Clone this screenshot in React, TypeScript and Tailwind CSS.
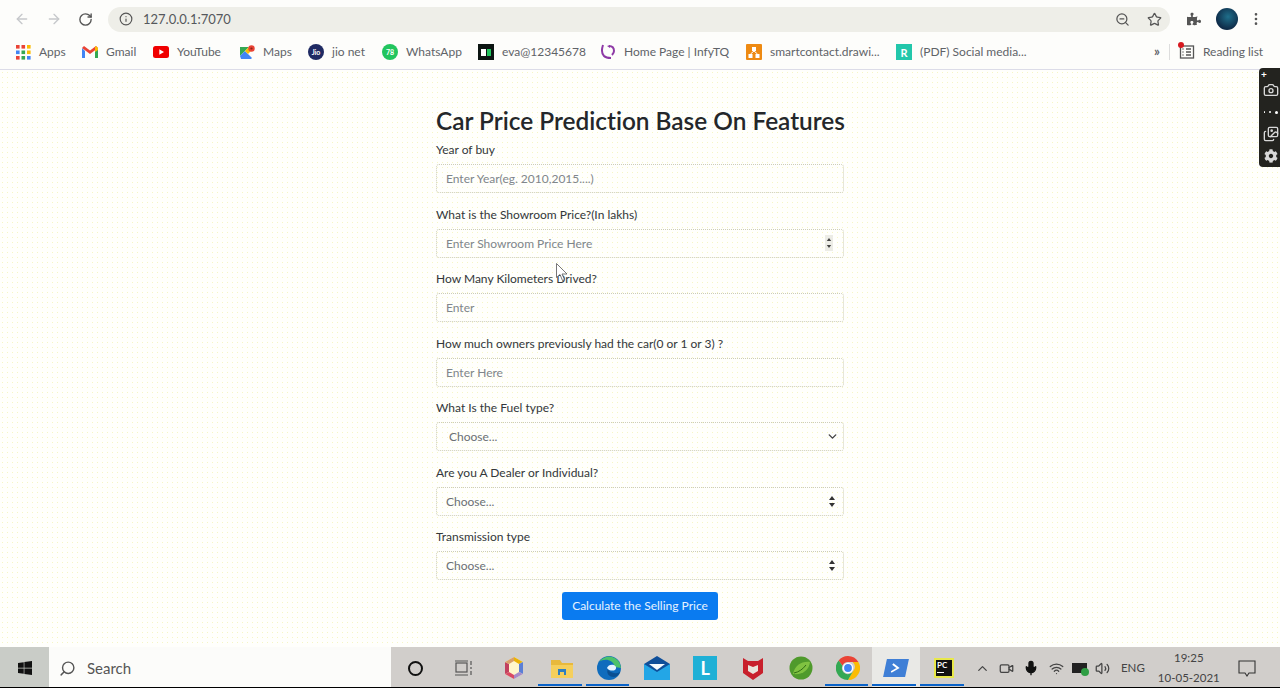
import { ArrowLeft, ArrowRight, RotateCw, Info, ZoomOut, Star, MoreVertical, ChevronDown, ChevronUp, Camera, Images, Search, Mic, Wifi, Volume2, Video } from "lucide-react";
import { FaCog, FaPuzzlePiece, FaWindows } from "react-icons/fa";

const font = { fontFamily: 'Lato, "Noto Sans", sans-serif' };

const AppsIcon = () => (
  <svg width="15" height="15" viewBox="0 0 15 15">
    {[["#ea4335", "#ea4335", "#fbbc04"], ["#4285f4", "#34a853", "#fbbc04"], ["#ea4335", "#34a853", "#4285f4"]].map((row, y) =>
      row.map((c, x) => <rect key={`${x}-${y}`} x={x * 5.5} y={y * 5.5} width="3.6" height="3.6" fill={c} />)
    )}
  </svg>
);

const GmailIcon = () => (
  <svg width="16" height="12" viewBox="0 0 16 12">
    <path d="M0 2v10h3V5z" fill="#4285f4" />
    <path d="M16 2v10h-3V5z" fill="#34a853" />
    <path d="M0 2l8 6 8-6-2-2-6 4.5L2 0z" fill="#ea4335" />
    <path d="M14 0l2 2v2l-3 2V1z" fill="#fbbc04" />
  </svg>
);

const YoutubeIcon = () => (
  <svg width="16" height="12" viewBox="0 0 16 12">
    <rect width="16" height="12" rx="2.5" fill="#f00000" />
    <path d="M6.3 3.2v5.6L11 6z" fill="#fff" />
  </svg>
);

const MapsIcon = () => (
  <svg width="15" height="15" viewBox="0 0 15 15">
    <path d="M0 2h9L0 11z" fill="#34a853" />
    <path d="M0 11l5-5 7 7-1 1H1z" fill="#4285f4" />
    <path d="M9 2L5 6l3 3 4-4z" fill="#fbbc04" />
    <circle cx="11.5" cy="3.5" r="3.2" fill="#ea4335" />
    <circle cx="11.5" cy="3.5" r="1.1" fill="#8c2318" />
  </svg>
);

const JioIcon = () => (
  <div className="w-4 h-4 rounded-full bg-[#1f2a63] flex items-center justify-center text-white text-[7px] font-bold leading-none">Jio</div>
);

const WhatsIcon = () => (
  <div className="w-4 h-4 rounded-full bg-[#22c55e] flex items-center justify-center text-white text-[7px] font-bold leading-none">78</div>
);

const HackIcon = () => (
  <div className="w-4 h-4 bg-[#0c1512] flex items-center justify-center gap-px">
    <div className="w-[5px] h-[7px] bg-white" />
    <div className="w-[4px] h-[7px] bg-[#22c55e]" />
  </div>
);

const InfyIcon = () => (
  <svg width="16" height="16" viewBox="0 0 16 16" fill="none" strokeWidth="2">
    <path d="M3 1c-1 3-2 8 1 11 2 2 5 2 7 2" stroke="#8e3aa6" />
    <path d="M9 2c3 0 5 2 5 5 0 2-1 3-2 4" stroke="#8e3aa6" />
    <path d="M7 2l3-1v3z" fill="#8e3aa6" />
  </svg>
);

const DrawIcon = () => (
  <svg width="16" height="16" viewBox="0 0 16 16">
    <rect width="16" height="16" rx="1" fill="#ee8a12" />
    <rect x="6" y="3" width="4" height="4" fill="#fff" />
    <rect x="2.5" y="10" width="4" height="4" fill="#fff" />
    <rect x="9.5" y="10" width="4" height="4" fill="#fff" />
    <path d="M8 7l-3.5 3M8 7l3.5 3" stroke="#fff" />
  </svg>
);

const RIcon = () => (
  <div className="w-4 h-4 bg-[#22c7ab] flex items-center justify-center text-white text-[11px] font-bold leading-none">R</div>
);

const bookmarks = [
  { icon: <AppsIcon />, label: "Apps", width: "w-[67px]" },
  { icon: <GmailIcon />, label: "Gmail", width: "w-[71px]" },
  { icon: <YoutubeIcon />, label: "YouTube", width: "w-[86px]" },
  { icon: <MapsIcon />, label: "Maps", width: "w-[69px]" },
  { icon: <JioIcon />, label: "jio net", width: "w-[74px]" },
  { icon: <WhatsIcon />, label: "WhatsApp", width: "w-[96px]" },
  { icon: <HackIcon />, label: "eva@12345678", width: "w-[122px]" },
  { icon: <InfyIcon />, label: "Home Page | InfyTQ", width: "w-[146px]" },
  { icon: <DrawIcon />, label: "smartcontact.drawi...", width: "w-[150px]" },
  { icon: <RIcon />, label: "(PDF) Social media...", width: "w-[140px]" },
];

const Toolbar = () => (
  <div className="h-[38px] flex items-center bg-[#fdfdfb] text-[#5f6368]">
    <div className="w-[108px] flex items-center pl-[14px] gap-[16px]">
      <ArrowLeft size={16} className="text-[#c6c8cb]" />
      <ArrowRight size={16} className="text-[#c6c8cb]" />
      <RotateCw size={15} strokeWidth={2.2} className="text-[#555]" />
    </div>
    <div className="w-[1062px] h-[25px] rounded-full bg-[#eeeee8] flex items-center pl-[11px] pr-[8px]">
      <Info size={14} className="text-[#555]" />
      <span className="ml-[10px] pt-px text-[13px] text-[#55585c]">127.0.0.1:7070</span>
      <ZoomOut size={15} className="ml-auto text-[#555]" />
      <Star size={15} className="ml-[17px] text-[#555]" />
    </div>
    <FaPuzzlePiece size={14} className="ml-[17px] text-[#555]" />
    <div className="ml-[15px] w-[22px] h-[22px] rounded-full bg-[radial-gradient(circle_at_55%_40%,#1f6f8b,#0e2a47_70%)]" />
    <MoreVertical size={16} className="ml-[10px] text-[#555]" />
  </div>
);

const BookmarkBar = () => (
  <div className="h-[32px] pb-[3px] flex items-center pl-[15px] bg-[#fdfdfb] border-b border-[#dcdce8] text-[12px] text-[#5f6368]">
    {bookmarks.map((b) => (
      <div key={b.label} className={`${b.width} flex items-center gap-2 whitespace-nowrap`}>
        <div className="w-4 flex justify-center">{b.icon}</div>
        <span>{b.label}</span>
      </div>
    ))}
    <span className="ml-[118px] text-[13px] font-bold">»</span>
    <div className="ml-[9px] w-px h-4 bg-[#dddddd]" />
    <div className="relative ml-[9px] flex items-center gap-2 whitespace-nowrap">
      <svg width="16" height="14" viewBox="0 0 16 14" fill="none" stroke="#555" strokeWidth="1.3">
        <rect x="1.5" y="1" width="13" height="12" />
        <path d="M7 4h5M7 7h5M7 10h5M3.5 4h1M3.5 7h1M3.5 10h1" />
      </svg>
      <span>Reading list</span>
      <div className="absolute -left-px top-[-1px] w-[6px] h-[6px] rounded-full bg-[#d71920]" />
    </div>
  </div>
);

const Field = ({ label, placeholder, spin }: { label: string; placeholder: string; spin?: boolean }) => (
  <div className="h-[64.5px]">
    <label className="block h-[23px] leading-[18px] text-[12px] text-[#33373a]">{label}</label>
    <div className="relative">
      <input
        placeholder={placeholder}
        className="w-full h-[29px] px-[9px] rounded-[3px] border border-dotted border-[#cdcdb8] bg-transparent text-[12px] placeholder:text-[#80868b] outline-none"
      />
      {spin && (
        <svg className="absolute right-[11px] top-[6px]" width="8" height="16" viewBox="0 0 8 16">
          <rect width="8" height="16" fill="#ecece6" />
          <path d="M4 3l2.2 3H1.8zM4 13l2.2-3H1.8z" fill="#444" />
        </svg>
      )}
    </div>
  </div>
);

const SelectField = ({ label, chevron }: { label: string; chevron?: boolean }) => (
  <div className="h-[64.5px]">
    <label className="block h-[23px] leading-[18px] text-[12px] text-[#33373a]">{label}</label>
    <div className="relative">
      <select
        defaultValue=""
        className={`appearance-none w-full h-[29px] pt-px rounded-[3px] border border-dotted border-[#cdcdb8] bg-transparent text-[12px] text-[#6b7075] outline-none ${chevron ? "pl-[12px]" : "pl-[9px]"}`}
      >
        <option value="">Choose...</option>
      </select>
      {chevron ? (
        <ChevronDown size={13} strokeWidth={2.6} className="absolute right-[5px] top-[8px] text-[#444]" />
      ) : (
        <svg className="absolute right-[9px] top-[9px]" width="6" height="11" viewBox="0 0 6 11">
          <path d="M3 0l3 4H0zM3 11l3-4H0z" fill="#333" />
        </svg>
      )}
    </div>
  </div>
);

const CaptureWidget = () => (
  <div className="absolute right-0 top-[-2px] w-[21px] h-[99px] rounded-l-[4px] bg-[#23231f] text-[#d8d8d8] flex flex-col items-center">
    <div className="self-start ml-[2px] mt-[1px] text-white text-[10px] leading-[10px] font-bold">+</div>
    <Camera size={16} className="mt-[3px] ml-[2px]" />
    <div className="flex gap-[4px] mt-[13px] ml-[3px]">
      <div className="w-[1.5px] h-[1.5px] rounded-full bg-white" />
      <div className="w-[2px] h-[2px] rounded-full bg-white" />
      <div className="w-[3px] h-[3px] rounded-full bg-white" />
    </div>
    <Images size={16} className="mt-[12px] ml-[2px]" />
    <FaCog size={14} className="mt-[7px] ml-[2px]" />
  </div>
);

const Cursor = () => (
  <svg className="absolute left-[556px] top-[193px]" width="14" height="20" viewBox="0 0 14 20" fill="#ffffff" stroke="#555" strokeWidth="0.8">
    <path d="M0.5 0.5v14l3.5-3 2.5 6 2-1-2.5-5.5h5z" />
  </svg>
);

const Page = () => (
  <div className="relative flex-1 bg-[#fffffc] bg-[radial-gradient(#f6f6c4_0.7px,transparent_0.8px)] bg-[length:5px_5px] text-[#212529]">
    <CaptureWidget />
    <Cursor />
    <div className="w-[408px] mx-auto pt-[33px]">
      <h2 className="h-[36px] leading-[36px] text-[24.4px] font-semibold [font-variant-ligatures:none] text-[#24272a] whitespace-nowrap">Car Price Prediction Base On Features</h2>
      <div className="pt-[2px]">
        <Field label="Year of buy" placeholder="Enter Year(eg. 2010,2015....)" />
        <Field label="What is the Showroom Price?(In lakhs)" placeholder="Enter Showroom Price Here" spin />
        <Field label="How Many Kilometers Drived?" placeholder="Enter" />
        <Field label="How much owners previously had the car(0 or 1 or 3) ?" placeholder="Enter Here" />
        <SelectField label="What Is the Fuel type?" chevron />
        <SelectField label="Are you A Dealer or Individual?" />
        <SelectField label="Transmission type" />
      </div>
      <div className="flex justify-center mt-[-1px]">
        <button className="w-[156px] h-[28px] pt-px rounded-[3px] bg-[#0a7bf0] text-[12px] text-[#e6f2ff]">Calculate the Selling Price</button>
      </div>
    </div>
  </div>
);

const Hex = () => (
  <svg width="22" height="24" viewBox="0 0 22 24">
    <path d="M11 1l9 5v12l-9 5-9-5V6z" fill="#fff7cc" />
    <path d="M11 1l9 5-4 2-5-3z" fill="#eab308" />
    <path d="M20 6v12l-4-2V8z" fill="#5b7fd6" />
    <path d="M20 18l-9 5v-4l5-3z" fill="#a78bc9" />
    <path d="M2 18l9 5v-4l-5-3z" fill="#d94a64" />
    <path d="M2 6v12l4-2V8z" fill="#c2415f" />
    <path d="M2 6l9-5v4L6 8z" fill="#d9a06a" />
  </svg>
);

const Folder = () => (
  <svg width="22" height="20" viewBox="0 0 22 20">
    <path d="M0 2h9l2 3h11v4H0z" fill="#e8b93c" />
    <rect y="7" width="22" height="13" fill="#f5cf5c" />
    <path d="M7 11h8v6h-2v-3H9v3H7z" fill="#2f7fc1" />
  </svg>
);

const Edge = () => (
  <svg width="24" height="24" viewBox="0 0 24 24">
    <circle cx="12" cy="12" r="12" fill="#0f6cbd" />
    <path d="M24 12A12 12 0 0 0 2 6c5-4 14-3 16 5z" fill="#4cc26a" />
    <path d="M24 13c0 3-3 5-7 4-3-1-5-1-6-4-2 3 0 8 6 8 3 0 6-3 7-8z" fill="#0b4f91" />
    <path d="M10 12c1-3 4-4 7-3 2 1 3 3 1 5-2 1-6 1-8-2z" fill="#e6f4ff" />
  </svg>
);

const Mail = () => (
  <svg width="26" height="24" viewBox="0 0 26 24">
    <rect y="8" width="26" height="16" fill="#23a6e6" />
    <path d="M0 8l13-8 13 8-13 8z" fill="#0f4f9a" />
    <path d="M5 8h16l-8 6z" fill="#f5fbff" />
  </svg>
);

const LTile = () => (
  <div className="w-6 h-6 bg-[#1fb0d6] flex items-center justify-center text-white text-[18px] font-bold leading-none">L</div>
);

const McAfee = () => (
  <svg width="22" height="24" viewBox="0 0 22 24">
    <path d="M1 2l5 3h10l5-3v15l-10 7-10-7z" fill="#c8202c" />
    <path d="M6 9l5 2 5-2v6l-5 3-5-3z" fill="#e9e4dc" />
  </svg>
);

const Leaf = () => (
  <svg width="24" height="24" viewBox="0 0 24 24">
    <circle cx="12" cy="12" r="11.5" fill="#4f9a2c" />
    <path d="M4 18C6 9 13 5 21 6c-1 8-7 13-17 12z" fill="#7fc241" />
    <path d="M5 17c5-1 9-4 12-8" stroke="#2f6b16" fill="none" />
  </svg>
);

const ChromeIcon = () => (
  <svg width="24" height="24" viewBox="0 0 24 24">
    <path d="M12 0a12 12 0 0 1 10.4 6H12a6 6 0 0 0-5.6 3.8L2.6 4.4A12 12 0 0 1 12 0z" fill="#ea4335" />
    <path d="M22.4 6A12 12 0 0 1 12 24l5.2-9a6 6 0 0 0-.6-9z" fill="#fbbc04" />
    <path d="M2.6 4.4A12 12 0 0 0 12 24l5.2-9a6 6 0 0 1-10.8-5.2z" fill="#34a853" />
    <circle cx="12" cy="12" r="4.6" fill="#4285f4" stroke="#fff" strokeWidth="1.4" />
  </svg>
);

const PowerShell = () => (
  <div className="w-[22px] h-[18px] bg-[#3f7fd6] skew-x-[-12deg] flex items-center justify-center">
    <svg width="12" height="12" viewBox="0 0 12 12" fill="none" stroke="#fff" strokeWidth="1.8">
      <path d="M2 2l6 4-6 4" />
    </svg>
  </div>
);

const PyCharm = () => (
  <div className="w-[20px] h-[20px] bg-[#111] border-2 border-[#e8e84a] text-white text-[8px] font-bold leading-[10px] pl-px">
    PC
    <div className="w-[7px] h-px bg-white mt-[2px]" />
  </div>
);

const TaskItem = ({ children, open, active }: { children: React.ReactNode; open?: boolean; active?: boolean }) => (
  <div className={`relative w-[47.8px] h-full pt-[2px] flex items-center justify-center ${active ? "bg-[#e9e9e6]" : ""}`}>
    {children}
    {open && <div className="absolute left-0 right-[4px] bottom-px h-[2px] bg-[#0a63c9]" />}
  </div>
);

const Taskbar = () => (
  <div className="h-[41px] flex items-stretch bg-[#d1cecb] border-b border-black text-[#333]">
    <div className="w-[49px] pt-[2px] flex items-center justify-center bg-[#c9ccc7]">
      <FaWindows size={16} className="text-[#111]" />
    </div>
    <div className="w-[342px] pt-[2px] flex items-center pl-[10px] bg-[#fcfcfa] text-[#555]">
      <Search size={17} className="-scale-x-100" />
      <span className="ml-[11px] text-[15px]">Search</span>
    </div>
    <div className="w-[49px] pt-[2px] flex items-center justify-center">
      <div className="w-[15px] h-[15px] rounded-full border-2 border-[#111]" />
    </div>
    <div className="w-[50px] pt-[2px] flex items-center justify-center pr-[3px]">
      <svg width="18" height="16" viewBox="0 0 18 16" fill="none" stroke="#555" strokeWidth="1.2">
        <rect x="1" y="3" width="11" height="9" />
        <path d="M0 1h13M0 15h13M16 1v4M16 7v2M16 11v4" />
      </svg>
    </div>
    <TaskItem><Hex /></TaskItem>
    <TaskItem open><Folder /></TaskItem>
    <TaskItem open><Edge /></TaskItem>
    <TaskItem><Mail /></TaskItem>
    <TaskItem><LTile /></TaskItem>
    <TaskItem><McAfee /></TaskItem>
    <TaskItem><Leaf /></TaskItem>
    <TaskItem open><ChromeIcon /></TaskItem>
    <TaskItem open active><PowerShell /></TaskItem>
    <TaskItem open><PyCharm /></TaskItem>
    <div className="flex-1 flex items-center pt-[2px] pl-[7px] text-[#444]">
      <ChevronUp size={15} />
      <Video size={15} className="ml-[9px]" />
      <Mic size={16} className="ml-[9px] text-[#111] fill-[#111]" />
      <Wifi size={15} className="ml-[10px]" />
      <div className="relative ml-[8px] w-[15px] h-[10px] bg-[#222] border border-[#222]">
        <div className="absolute -right-[3px] -bottom-[4px] w-[8px] h-[8px] rounded-full bg-[#2f9e44]" />
      </div>
      <Volume2 size={15} className="ml-[8px]" />
      <span className="ml-[11px] text-[11.5px]">ENG</span>
      <div className="ml-[13px] w-[62px] text-center text-[11.5px] leading-[20px] whitespace-nowrap">
        <div>19:25</div>
        <div>10-05-2021</div>
      </div>
      <svg className="ml-[18px]" width="18" height="17" viewBox="0 0 18 17" fill="none" stroke="#333" strokeWidth="1.1">
        <path d="M1 1h16v12h-6l-2 3-2-3H1z" />
      </svg>
    </div>
  </div>
);

export default function App() {
  return (
    <div className="w-[1280px] h-[688px] flex flex-col overflow-hidden" style={font}>
      <Toolbar />
      <BookmarkBar />
      <Page />
      <Taskbar />
    </div>
  );
}
